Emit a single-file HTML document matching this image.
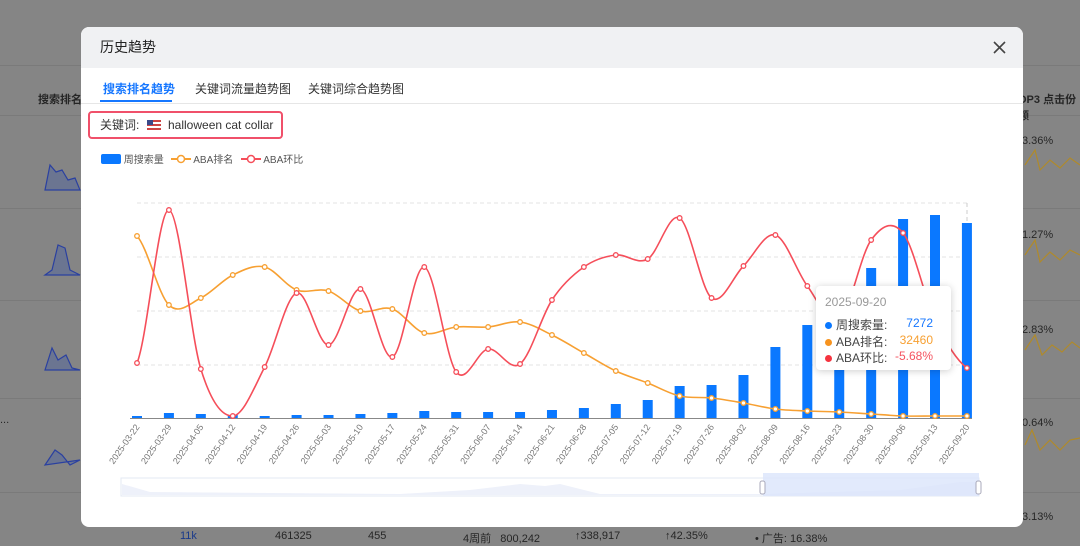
<!DOCTYPE html>
<html><head><meta charset="utf-8"><style>
body{margin:0;width:1080px;height:542px;overflow:hidden;background:#858585;font-family:"Liberation Sans","Noto Sans CJK SC",sans-serif;position:relative}
.bgt{position:absolute;color:#262626;font-size:11px}
.rowl{position:absolute;left:0;right:0;height:1px;background:#7a7a7a}
.modal{position:absolute;left:81px;top:27px;width:942px;height:500px;background:#fff;border-radius:8px;overflow:hidden}
.hd{height:41px;background:#f0f1f3;font-size:14px;color:#222;line-height:41px;padding-left:19px}
.tabs{position:absolute;top:41px;left:0;right:0;height:35px;border-bottom:1px solid #e6e6e6;font-size:12px;color:#333}
.tabs span{position:absolute;top:12px}
.kw{position:absolute;left:7px;top:84px;width:195px;height:28px;border:2.5px solid #f0506a;border-radius:4px;font-size:12px;color:#333;line-height:24px;padding-left:10px;box-sizing:border-box}
.lg{position:absolute;top:124px;font-size:10px;color:#555}
.tip{position:absolute;left:816px;top:286px;width:135px;height:84px;background:#fff;border-radius:4px;box-shadow:0 1px 8px rgba(0,0,0,.2);font-size:12px;color:#444}
.tip div{position:absolute;left:9px}
.tip b{font-weight:normal;position:absolute;right:9px}
.dot{display:inline-block;width:7px;height:7px;border-radius:50%;margin-right:4px}
</style></head><body>
<div class="rowl" style="top:65px"></div><div class="rowl" style="top:115px"></div><div class="rowl" style="top:208px"></div><div class="rowl" style="top:300px"></div><div class="rowl" style="top:398px"></div><div class="rowl" style="top:492px"></div>
<svg width="1080" height="542" style="position:absolute;left:0;top:0">
<g fill="#5a6a9a" fill-opacity=".6" stroke="#2a40a0" stroke-width="1.2">
<path d="M45 190 L50 165 L56 172 L62 170 L68 180 L75 178 L80 190Z"/>
<path d="M45 275 L52 270 L58 245 L65 248 L70 270 L80 275Z"/>
<path d="M45 370 L52 348 L58 360 L66 355 L72 368 L80 370Z"/>
<path d="M45 465 L55 450 L62 455 L70 465 L80 460Z"/>
</g>
<g fill="none" stroke="#b08a2a" stroke-width="1.2">
<path d="M1025 165 L1035 150 L1040 170 L1050 160 L1060 168 L1070 158 L1080 165"/>
<path d="M1025 255 L1035 240 L1040 262 L1050 252 L1060 260 L1070 250 L1080 255"/>
<path d="M1025 350 L1035 335 L1042 355 L1052 345 L1062 352 L1072 342 L1080 348"/>
<path d="M1025 445 L1032 430 L1040 450 L1050 440 L1060 450 L1070 440 L1080 438"/>
</g>
</svg>
<div class="bgt" style="left:38px;top:91px;font-weight:bold">搜索排名趋</div>
<div class="bgt" style="left:1018px;top:91px;font-weight:bold">OP3 点击份额</div>
<div class="bgt" style="left:1022px;top:135px">3.36%</div>
<div class="bgt" style="left:1022px;top:229px">1.27%</div>
<div class="bgt" style="left:1022px;top:324px">2.83%</div>
<div class="bgt" style="left:1022px;top:417px">0.64%</div>
<div class="bgt" style="left:1022px;top:511px">3.13%</div>
<div class="bgt" style="left:0;top:414px">...</div>
<div class="bgt" style="left:180px;top:530px;color:#1a3a8a">11k</div>
<div class="bgt" style="left:275px;top:530px">461325</div>
<div class="bgt" style="left:368px;top:530px">455</div>
<div class="bgt" style="left:463px;top:530px">4周前 &nbsp; 800,242</div>
<div class="bgt" style="left:575px;top:530px">↑338,917</div>
<div class="bgt" style="left:665px;top:530px">↑42.35%</div>
<div class="bgt" style="left:755px;top:530px">• 广告: 16.38%</div>
<div class="modal">
<div class="hd">历史趋势</div>
<svg style="position:absolute;right:17px;top:14px" width="13" height="13"><path d="M1 1L12 12M12 1L1 12" stroke="#444" stroke-width="1.6"/></svg>
<div class="tabs"><span style="left:22px;color:#1677ff;font-weight:bold">搜索排名趋势</span><div style="position:absolute;left:19px;top:32px;width:72px;height:2px;background:#1677ff"></div>
<span style="left:114px">关键词流量趋势图</span><span style="left:227px">关键词综合趋势图</span></div>
<div class="kw">关键词: <span style="display:inline-block;width:14px;height:10px;background:linear-gradient(#c44 0 20%,#fff 20% 40%,#c44 40% 60%,#fff 60% 80%,#c44 80%);position:relative;vertical-align:-1px;margin:0 4px"><span style="position:absolute;left:0;top:0;width:6px;height:5px;background:#3a4a8a"></span></span> halloween cat collar</div>
<div class="lg" style="left:20px"><span style="display:inline-block;width:20px;height:10px;background:#0a78ff;border-radius:2px;vertical-align:-1px"></span> 周搜索量</div>
<div class="lg" style="left:90px"><svg width="20" height="10" style="vertical-align:-1px"><line x1="0" y1="5" x2="20" y2="5" stroke="#f7a032" stroke-width="2"/><circle cx="10" cy="5" r="3.5" fill="#fff" stroke="#f7a032" stroke-width="1.5"/></svg> ABA排名</div>
<div class="lg" style="left:160px"><svg width="20" height="10" style="vertical-align:-1px"><line x1="0" y1="5" x2="20" y2="5" stroke="#f54e5a" stroke-width="2"/><circle cx="10" cy="5" r="3.5" fill="#fff" stroke="#f54e5a" stroke-width="1.5"/></svg> ABA环比</div>
</div>
<svg id="ch" width="1080" height="542" style="position:absolute;left:0;top:0"></svg>
<div class="tip">
<div style="top:9px;color:#999">2025-09-20</div>
<div style="top:30px;width:117px"><span class="dot" style="background:#0a78ff"></span>周搜索量:<b style="color:#1677ff">7272</b></div>
<div style="top:47px;width:117px"><span class="dot" style="background:#f7931e"></span>ABA排名:<b style="color:#f7a032">32460</b></div>
<div style="top:63px;width:117px"><span class="dot" style="background:#f5333f"></span>ABA环比:<b style="color:#f5535f">-5.68%</b></div>
</div>
<script>
var bars=[416,413,414,415,416,415,415,414,413,411,412,412,412,410,408,404,400,386,385,375,347,325,300,268,219,215,223];
var or=[236,305,298,275,267,290,291,311,309,333,327,327,322,335,353,371,383,396,398,403,409,411,412,414,416,416,416];
var rd=[363,210,369,416,367,293,345,289,357,267,372,349,364,300,267,255,259,218,298,266,235,286,320,240,233,320,368];
var dates=["03-22","03-29","04-05","04-12","04-19","04-26","05-03","05-10","05-17","05-24","05-31","06-07","06-14","06-21","06-28","07-05","07-12","07-19","07-26","08-02","08-09","08-16","08-23","08-30","09-06","09-13","09-20"];
var X=i=>137+i*31.92,s='';
[203,257,311,365].forEach(y=>s+=`<line x1="137" x2="967" y1="${y}" y2="${y}" stroke="#e3e3e3" stroke-dasharray="4 3"/>`);
s+=`<line x1="967" x2="967" y1="203" y2="418" stroke="#ccc" stroke-dasharray="4 3"/>`;
bars.forEach((b,i)=>s+=`<rect x="${X(i)-5}" y="${b}" width="10" height="${418-b}" fill="#0a78ff"/>`);
s+=`<line x1="130" x2="972" y1="418.5" y2="418.5" stroke="#888"/>`;
function path(a,c){var d='M'+X(0)+' '+a[0];for(var i=0;i<a.length-1;i++){var p0=a[Math.max(i-1,0)],p1=a[i],p2=a[i+1],p3=a[Math.min(i+2,a.length-1)];var t=0.5/3*2;d+=` C${X(i)+10.6} ${p1+(p2-p0)*t/2} ${X(i+1)-10.6} ${p2-(p3-p1)*t/2} ${X(i+1)} ${p2}`;}
var r=`<path d="${d}" fill="none" stroke="${c}" stroke-width="1.6"/>`;a.forEach((y,i)=>r+=`<circle cx="${X(i)}" cy="${y}" r="2.3" fill="#fff" stroke="${c}" stroke-width="1.3"/>`);return r;}
s+=path(or,'#f7a032');s+=path(rd,'#f54e5a');
dates.forEach((d,i)=>s+=`<text transform="translate(${X(i)+3},${427}) rotate(-55)" text-anchor="end" font-size="9" fill="#777" font-family="Liberation Sans">2025-${d}</text>`);
s+=`<rect x="121" y="478" width="858" height="18" fill="#fff" stroke="#e3e8f3"/><path d="M122 484 L150 492 L400 494 L470 490 L520 484 L545 486 L560 484 L600 494 L760 494 L900 490 L960 482 L978 482 L978 495 L122 495Z" fill="#eef1fa"/><rect x="763" y="473" width="216" height="23" fill="#dbe5fb" opacity=".8"/><rect x="760" y="481" width="5" height="13" rx="2" fill="#fff" stroke="#aab"/><rect x="976" y="481" width="5" height="13" rx="2" fill="#fff" stroke="#aab"/>`;
document.getElementById('ch').innerHTML=s;
</script>
</body></html>
